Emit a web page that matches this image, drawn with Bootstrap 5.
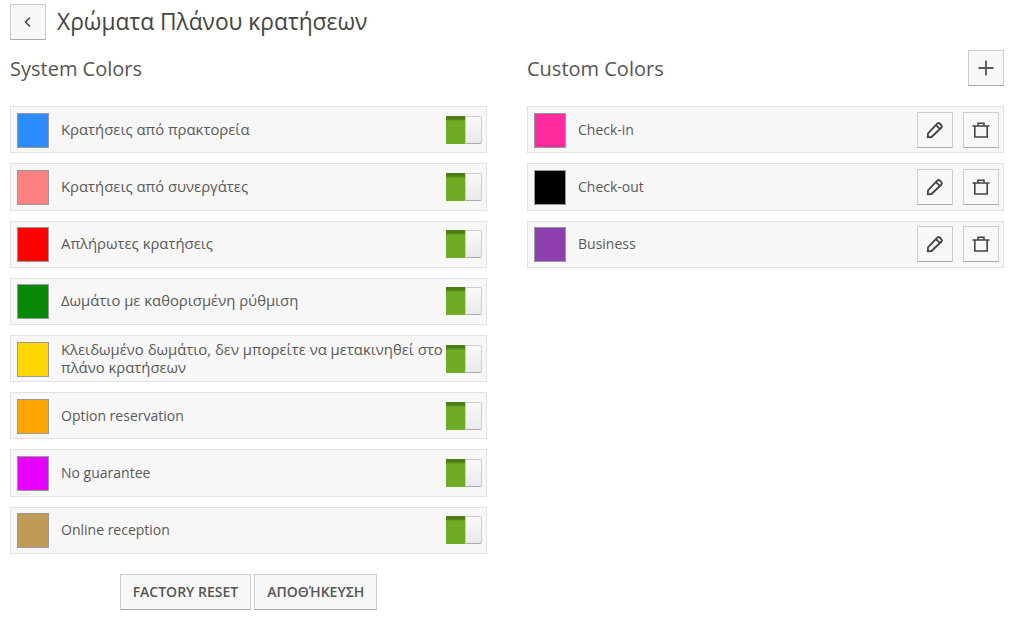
<!DOCTYPE html>
<html lang="el"><head><meta charset="utf-8"><title>Χρώματα</title>
<link rel="stylesheet" href="https://cdn.jsdelivr.net/npm/bootstrap@5.3.0/dist/css/bootstrap.min.css">
<style>
html,body{height:619px;overflow:hidden;background:#fff}
body{font-family:"Open Sans","Noto Sans",sans-serif;color:#555;font-size:14px}
.pg{padding:4px 6px 0 10px}
.lbl.gr{font-size:14.85px;padding-bottom:2px}
.sq-btn{width:36px;height:36px;padding:0;display:flex;align-items:center;justify-content:center;background:#f8f8f8;border:1px solid #ccc;border-bottom-color:#aaa;border-radius:1px;color:#444;flex:none}
.title{font-size:22.75px;font-weight:400;color:#444;margin:0 0 0 11px;line-height:36px}
.head-row{height:36px;margin-top:10px;margin-bottom:20.28px}
.sub{font-size:20px;font-weight:400;color:#555;margin:0;padding-top:2px;line-height:34px}
.cols{display:grid;grid-template-columns:477px 477px;column-gap:40px}
.crow{min-height:47.21px;margin-bottom:10px;background:#f7f7f7;border:1px solid #e2e2e2;padding:0 4px 0 6px;display:flex;align-items:center}
.swatch{width:32px;height:35px;border:1px solid #999;flex:none;margin-right:12px;margin-top:1px}
.lbl{flex:1;line-height:18px;color:#5a5a5a;font-size:14px;margin-right:0;min-width:0;white-space:normal}
.tog{width:36px;height:28px;display:flex;flex:none;border-radius:1px}
.tog-on{width:19px;background:linear-gradient(#4c7d14 0,#4c7d14 3px,#6eac24 5px)}
.tog-off{width:17px;background:linear-gradient(#f9f9f9,#e9eaec);border:1px solid #ccc;border-bottom-color:#aaa;border-radius:0 2px 2px 0}
.crow .sq-btn{margin-left:10px}
.crow .sq-btn:first-of-type{margin-left:0}
.foot{gap:3px;margin-top:20px}
.act{height:36px;padding:0 12px;background:#f8f8f8;border:1px solid #ccc;border-bottom-color:#aaa;border-radius:1px;font-size:14px;font-weight:600;color:#555}
</style></head><body>
<div class="pg">
<div class="d-flex align-items-center">
<button class="sq-btn" aria-label="back"><svg width="12" height="14" viewBox="0 0 12 14" fill="none" stroke="#444" stroke-width="1.6"><path d="M8 2.5 3.5 7 8 11.5"/></svg></button>
<h1 class="title">Χρώματα Πλάνου κρατήσεων</h1>
</div>
<div class="cols">
<div>
<div class="head-row d-flex align-items-center"><h2 class="sub">System Colors</h2></div>
<div class="crow"><span class="swatch" style="background:#2b8cff"></span><span class="lbl gr">Κρατήσεις από πρακτορεία</span><span class="tog"><span class="tog-on"></span><span class="tog-off"></span></span></div>
<div class="crow"><span class="swatch" style="background:#ff8080"></span><span class="lbl gr">Κρατήσεις από συνεργάτες</span><span class="tog"><span class="tog-on"></span><span class="tog-off"></span></span></div>
<div class="crow"><span class="swatch" style="background:#ff0000"></span><span class="lbl gr">Απλήρωτες κρατήσεις</span><span class="tog"><span class="tog-on"></span><span class="tog-off"></span></span></div>
<div class="crow"><span class="swatch" style="background:#088a08"></span><span class="lbl gr">Δωμάτιο με καθορισμένη ρύθμιση</span><span class="tog"><span class="tog-on"></span><span class="tog-off"></span></span></div>
<div class="crow"><span class="swatch" style="background:#ffd700"></span><span class="lbl gr">Κλειδωμένο δωμάτιο, δεν μπορείτε να μετακινηθεί στο πλάνο κρατήσεων</span><span class="tog"><span class="tog-on"></span><span class="tog-off"></span></span></div>
<div class="crow"><span class="swatch" style="background:#ffa500"></span><span class="lbl">Option reservation</span><span class="tog"><span class="tog-on"></span><span class="tog-off"></span></span></div>
<div class="crow"><span class="swatch" style="background:#e600ff"></span><span class="lbl">No guarantee</span><span class="tog"><span class="tog-on"></span><span class="tog-off"></span></span></div>
<div class="crow"><span class="swatch" style="background:#c19a55"></span><span class="lbl">Online reception</span><span class="tog"><span class="tog-on"></span><span class="tog-off"></span></span></div>
<div class="d-flex justify-content-center foot"><button class="act">FACTORY RESET</button><button class="act">ΑΠΟΘΉΚΕΥΣΗ</button></div>
</div>
<div>
<div class="head-row d-flex align-items-center justify-content-between"><h2 class="sub">Custom Colors</h2><button class="sq-btn" aria-label="add"><svg width="18" height="18" viewBox="0 0 18 18" stroke="#555" stroke-width="1.8"><path d="M9 1.5v15M1.5 9h15"/></svg></button></div>
<div class="crow"><span class="swatch" style="background:#ff2a9d"></span><span class="lbl">Check-in</span><button class="sq-btn" aria-label="edit"><svg width="18" height="18" viewBox="0 0 18 18" fill="none" stroke="#444" stroke-width="1.8"><path d="M5.5 16 1.8 16.2 2 12.5 11.5 2.5a1.6 1.6 0 0 1 2.2 0l1.8 1.8a1.6 1.6 0 0 1 0 2.2z"/><path d="M10 4.2l4 4"/></svg></button><button class="sq-btn" aria-label="delete"><svg width="18" height="18" viewBox="0 0 18 18" fill="none" stroke="#444" stroke-width="1.6"><path d="M.5 5h17M2.8 5v11h12.4V5M6 5V2.2h6V5"/></svg></button></div>
<div class="crow"><span class="swatch" style="background:#000"></span><span class="lbl">Check-out</span><button class="sq-btn" aria-label="edit"><svg width="18" height="18" viewBox="0 0 18 18" fill="none" stroke="#444" stroke-width="1.8"><path d="M5.5 16 1.8 16.2 2 12.5 11.5 2.5a1.6 1.6 0 0 1 2.2 0l1.8 1.8a1.6 1.6 0 0 1 0 2.2z"/><path d="M10 4.2l4 4"/></svg></button><button class="sq-btn" aria-label="delete"><svg width="18" height="18" viewBox="0 0 18 18" fill="none" stroke="#444" stroke-width="1.6"><path d="M.5 5h17M2.8 5v11h12.4V5M6 5V2.2h6V5"/></svg></button></div>
<div class="crow"><span class="swatch" style="background:#8e3fae"></span><span class="lbl">Business</span><button class="sq-btn" aria-label="edit"><svg width="18" height="18" viewBox="0 0 18 18" fill="none" stroke="#444" stroke-width="1.8"><path d="M5.5 16 1.8 16.2 2 12.5 11.5 2.5a1.6 1.6 0 0 1 2.2 0l1.8 1.8a1.6 1.6 0 0 1 0 2.2z"/><path d="M10 4.2l4 4"/></svg></button><button class="sq-btn" aria-label="delete"><svg width="18" height="18" viewBox="0 0 18 18" fill="none" stroke="#444" stroke-width="1.6"><path d="M.5 5h17M2.8 5v11h12.4V5M6 5V2.2h6V5"/></svg></button></div>
</div>
</div>
</div>
</body></html>
